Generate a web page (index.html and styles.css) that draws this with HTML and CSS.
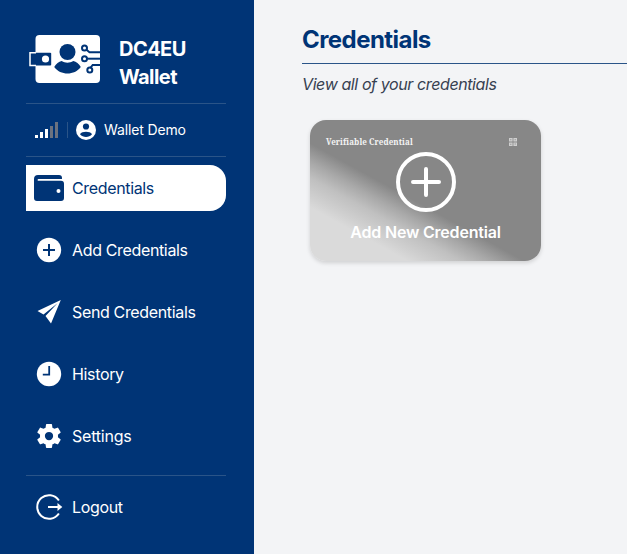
FILE: index.html
```html
<!DOCTYPE html>
<html lang="en">
<head>
<meta charset="utf-8">
<title>DC4EU Wallet</title>
<link rel="stylesheet" href="styles.css">
</head>
<body>
<div class="app">
  <aside class="sidebar">
    <div class="brand">
      <svg class="logo" width="72" height="50" viewBox="0 0 72 50">
        <rect x="6.500" y="1" width="64.500" height="48" rx="4" fill="#fff"/>
        <path d="M1 18.800h20.200q1 0 1 1V30.400q0 1-1 1H1z" fill="#003476"/>
        <path d="M7 18.800H1v12.600h6" fill="none" stroke="#fff" stroke-width="1.500"/>
        <circle cx="16.500" cy="25" r="3.600" fill="#fff"/>
        <circle cx="38.500" cy="18" r="8" fill="#003476"/>
        <path d="M25.200 33c2-3.500 4.500-5.500 7.500-6 3.500 2.300 7.900 2.300 11.600 0 3 .5 5.500 2.500 7.500 6-6.200 8.700-20.400 8.700-26.600 0z" fill="#003476"/>
        <g fill="none" stroke="#003476" stroke-width="2">
          <circle cx="55.500" cy="14" r="2.500"/><path d="M57.500 15.800l3 2.400H71"/>
          <circle cx="55.500" cy="24.700" r="2.500"/><path d="M58 24.700h13"/>
          <circle cx="60.800" cy="36" r="2.500"/><path d="M61.700 33.500l2-2.500H71"/>
        </g>
      </svg>
      <h1>DC4EU<br>Wallet</h1>
    </div>
    <div class="user">
      <div class="signal"><i class="s1"></i><i class="s2"></i><i class="s3"></i><i class="s4 off"></i><i class="s5 off"></i></div>
      <span class="divider"></span>
      <svg class="avatar" width="20" height="20" viewBox="0 0 20 20"><circle cx="10" cy="10" r="10" fill="#fff"/><circle cx="10" cy="6.500" r="3.100" fill="#003476"/><path d="M4 14.200c2-3.200 10-3.200 12 0-3 3.700-9 3.700-12 0z" fill="#003476"/></svg>
      <span class="name">Wallet Demo</span>
    </div>
    <nav class="menu">
      <a class="item active">
        <svg width="30" height="28" viewBox="0 0 30 28"><path d="M4 1h21q3 0 3 3v.500q0 .500-.500.500H4.500a.9.9 0 0 0 0 1.800H27q3 0 3 3V24q0 3-3 3H3q-3 0-3-3V5q0-4 4-4z" fill="#003476"/><circle cx="24.500" cy="17" r="2" fill="#fff"/></svg>
        <span>Credentials</span>
      </a>
      <a class="item">
        <svg width="30" height="30" viewBox="0 0 30 30"><circle cx="15" cy="15" r="12.200" fill="#fff"/><path d="M15 9v12M9 15h12" stroke="#003476" stroke-width="2"/></svg>
        <span>Add Credentials</span>
      </a>
      <a class="item">
        <svg width="30" height="30" viewBox="0 0 30 30"><path d="M26.800 3L3.500 14l6 3.400L23.500 6.200 11.500 19 17 26.500z" fill="#fff"/></svg>
        <span>Send Credentials</span>
      </a>
      <a class="item">
        <svg width="30" height="30" viewBox="0 0 30 30"><circle cx="15" cy="15" r="12.200" fill="#fff"/><path d="M15.200 7v8.600H8.800" fill="none" stroke="#003476" stroke-width="1.800"/></svg>
        <span>History</span>
      </a>
      <a class="item">
        <svg width="30" height="30" viewBox="0 0 24 24"><path fill="#fff" d="M19.140 12.940c.04-.3.060-.61.060-.94 0-.32-.02-.64-.07-.94l2.030-1.580a.49.49 0 0 0 .12-.61l-1.920-3.320a.488.488 0 0 0-.59-.22l-2.390.96c-.5-.38-1.030-.7-1.620-.94l-.36-2.540a.484.484 0 0 0-.48-.41h-3.840c-.24 0-.43.17-.47.41l-.36 2.540c-.59.24-1.130.57-1.620.94l-2.390-.96c-.22-.08-.47 0-.59.22L2.740 8.870c-.12.21-.08.47.12.61l2.030 1.580c-.05.3-.09.63-.09.94s.02.64.07.94l-2.030 1.580a.49.49 0 0 0-.12.61l1.920 3.320c.12.22.37.29.59.22l2.390-.96c.5.38 1.030.7 1.620.94l.36 2.540c.05.24.24.41.48.41h3.840c.24 0 .44-.17.47-.41l.36-2.540c.59-.24 1.130-.56 1.620-.94l2.390.96c.22.08.47 0 .59-.22l1.920-3.320c.12-.22.07-.47-.12-.61l-2.010-1.580zM12 15.300a3.300 3.300 0 1 1 0-6.600 3.300 3.300 0 0 1 0 6.600z"/></svg>
        <span class="settings">Settings</span>
      </a>
    </nav>
    <div class="logout">
      <a class="item">
        <svg width="30" height="30" viewBox="0 0 30 30"><path d="M24.900 8.500A11.800 11.800 0 1 0 24.900 21.500" fill="none" stroke="#fff" stroke-width="2"/><path d="M14 15h11" stroke="#fff" stroke-width="2"/><path d="M23.500 11l4.800 4-4.800 4z" fill="#fff"/></svg>
        <span>Logout</span>
      </a>
    </div>
  </aside>
  <main class="content">
    <h2>Credentials</h2>
    <p class="sub">View all of your credentials</p>
    <div class="card">
      <div class="card-top">
        <span class="kind">Verifiable Credential</span>
        <svg width="8" height="8" viewBox="0 0 8 8" opacity=".6"><path d="M0 0h3.600v3.600H0zM4.400 0H8v3.600H4.400zM0 4.400h3.600V8H0zM4.400 4.400H8V8H4.400z" fill="#fff"/><path d="M1.300 1.300h1v1h-1zM5.700 1.300h1v1h-1zM1.300 5.700h1v1h-1zM5.700 5.500h1v1h-1z" fill="#878787"/></svg>
      </div>
      <svg class="plus" width="60" height="60" viewBox="0 0 60 60" fill="none" stroke="#fff" stroke-width="4"><circle cx="30" cy="30" r="28"/><path d="M30 17v26M17 30h26" stroke-linecap="round"/></svg>
      <span class="add">Add New Credential</span>
    </div>
  </main>
</div>
</body>
</html>
```

FILE: styles.css
```css
* { box-sizing: border-box; }
body { margin: 0; font-family: Inter, "Liberation Sans", sans-serif; background: #f3f4f6; }
.app { display: flex; height: 554px; overflow: hidden; }
.sidebar { width: 254px; flex: none; background: #003476; color: #fff; padding: 34px 28px 0 26px; }
.brand { display: flex; height: 69px; padding-left: 3px; }
.logo { flex: none; }
h1 { margin: 1px 0 0 18px; font-size: 20px; line-height: 28px; font-weight: 700; letter-spacing: -0.55px; }
.user { height: 54px; border-top: 1px solid #2a5488; border-bottom: 1px solid #2a5488; display: flex; align-items: center; padding-left: 9px; }
.signal { display: flex; align-items: flex-end; gap: 2px; height: 16px; width: 23px; }
.signal i { width: 3px; background: #fff; }
.signal .off { background: #6b7280; }
.s1 { height: 3px; }
.s2 { height: 6px; }
.s3 { height: 9px; }
.s4 { height: 12px; }
.s5 { height: 16px; }
.divider { width: 1px; height: 16px; background: #2a5488; margin: 0 8px 0 9px; }
.name { margin-left: 8px; font-size: 14px; letter-spacing: -0.14px; white-space: nowrap; position: relative; top: -1px; }
.menu { padding-top: 8px; display: flex; flex-direction: column; gap: 16px; height: 318px; }
.item { display: flex; align-items: center; gap: 8px; height: 46px; flex: none; padding-left: 8px; font-size: 16px; line-height: 24px; letter-spacing: -0.35px; white-space: nowrap; }
.item svg { flex: none; }
.item .settings { letter-spacing: -0.22px; }
.active { background: #fff; color: #003476; border-radius: 0 16px 16px 0; }
.logout { border-top: 1px solid #2a5488; padding-top: 8px; }
.content { flex: 1; min-width: 0; padding: 24px 0 0 48px; }
h2 { margin: 0; height: 40px; border-bottom: 1px solid #2a5488; color: #003476; font-size: 24px; line-height: 32px; font-weight: 700; letter-spacing: -0.55px; }
.sub { margin: 8px 0 0; color: #374151; font-size: 16px; line-height: 24px; font-style: italic; letter-spacing: -0.4px; white-space: nowrap; }
.card { margin: 24px 0 0 8px; width: 231px; height: 141px; border-radius: 16px; background: linear-gradient(208.800deg, #878787 56%, #a8a8a8 63%, #c0c0c0 69%, #d0d0d0 76%, #dadada 80%); box-shadow: 0 2px 4px rgba(0, 0, 0, .15); display: flex; flex-direction: column; align-items: center; color: #fff; }
.card-top { align-self: stretch; display: flex; justify-content: space-between; align-items: center; height: 12px; margin: 16px 24px 4px 16px; }
.kind { font-family: "Noto Serif", "DejaVu Serif", "Liberation Serif", serif; font-size: 8px; line-height: 12px; font-weight: 700; letter-spacing: 0.08px; color: #f3f3f3; white-space: nowrap; }
.plus { flex: none; }
.add { margin-top: 8px; font-size: 16px; line-height: 24px; font-weight: 600; letter-spacing: -0.2px; white-space: nowrap; }
```
